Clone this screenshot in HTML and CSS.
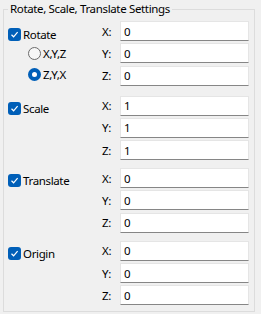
FILE: index.html
```html
<!DOCTYPE html>
<html>
<head lang="en">
    <meta charset="UTF-8">
    <title>Rotate, Scale, Translate Settings</title>
    <link rel="stylesheet" href="styles.css">
</head>
<body>
<fieldset class="group">
    <legend>Rotate, Scale, Translate Settings</legend>

    <div class="section first">
        <div class="side">
            <label class="check"><span class="box"><svg width="9" height="9" viewBox="0 0 9 9"><path d="M1.5 4.8 L3.6 6.8 L7.6 2.2" fill="none" stroke="#fff" stroke-width="1.2"/></svg></span>Rotate</label>
            <div class="radios">
                <label class="radio"><span class="dot"></span>X,Y,Z</label>
                <label class="radio on"><span class="dot"></span>Z,Y,X</label>
            </div>
        </div>
        <div class="fields">
            <label>X:</label><input type="text" value="0">
            <label>Y:</label><input type="text" value="0">
            <label>Z:</label><input type="text" value="0">
        </div>
    </div>

    <div class="section">
        <div class="side">
            <label class="check"><span class="box"><svg width="9" height="9" viewBox="0 0 9 9"><path d="M1.5 4.8 L3.6 6.8 L7.6 2.2" fill="none" stroke="#fff" stroke-width="1.2"/></svg></span>Scale</label>
        </div>
        <div class="fields">
            <label>X:</label><input type="text" value="1">
            <label>Y:</label><input type="text" value="1">
            <label>Z:</label><input type="text" value="1">
        </div>
    </div>

    <div class="section">
        <div class="side">
            <label class="check"><span class="box"><svg width="9" height="9" viewBox="0 0 9 9"><path d="M1.5 4.8 L3.6 6.8 L7.6 2.2" fill="none" stroke="#fff" stroke-width="1.2"/></svg></span>Translate</label>
        </div>
        <div class="fields">
            <label>X:</label><input type="text" value="0">
            <label>Y:</label><input type="text" value="0">
            <label>Z:</label><input type="text" value="0">
        </div>
    </div>

    <div class="section">
        <div class="side">
            <label class="check"><span class="box"><svg width="9" height="9" viewBox="0 0 9 9"><path d="M1.5 4.8 L3.6 6.8 L7.6 2.2" fill="none" stroke="#fff" stroke-width="1.2"/></svg></span>Origin</label>
        </div>
        <div class="fields">
            <label>X:</label><input type="text" value="0">
            <label>Y:</label><input type="text" value="0">
            <label>Z:</label><input type="text" value="0">
        </div>
    </div>
</fieldset>
</body>
</html>
```

FILE: styles.css
```css
* {
    margin: 0;
    padding: 0;
    box-sizing: border-box;
}

body {
    background-color: #f0f0f0;
    font: 11.5px "Noto Sans", "Liberation Sans", sans-serif;
    letter-spacing: -0.35px;
    color: #000;
    padding: 1px 0 0 3px;
}

.group {
    width: 252px;
    height: 311px;
    border: 1px solid #dcdcdc;
    padding: 4px 5px 0 4px;
}
.group legend {
    padding: 0 2px;
    line-height: 16px;
}

.section {
    display: flex;
    margin-bottom: 8px;
}
.section.first {
    margin-bottom: 10px;
}

.side {
    width: 94px;
    padding-top: 6px;
}
.first .side {
    padding-top: 7px;
}

.check {
    display: flex;
    align-items: center;
    gap: 2px;
    height: 13px;
}
.check .box {
    width: 13px;
    height: 13px;
    border-radius: 3px;
    background-color: #005fb8;
    display: flex;
    align-items: center;
    justify-content: center;
}
.check .box svg {
    display: block;
}

.radios {
    padding-left: 20px;
    margin-top: 6px;
    display: flex;
    flex-direction: column;
    gap: 8px;
}
.radio {
    display: flex;
    align-items: center;
    gap: 2px;
    height: 13px;
}
.radio .dot {
    width: 13px;
    height: 13px;
    border-radius: 50%;
    border: 1px solid #6b6b6b;
    background-color: #f7f7f7;
}
.radio.on .dot {
    border: 4px solid #005fb8;
    background-color: #fff;
}

.fields {
    display: grid;
    grid-template-columns: 18px 129px;
    row-gap: 2.3px;
    align-items: center;
}
.fields input {
    height: 20px;
    width: 129px;
    border: 1px solid #e5e5e5;
    border-bottom-color: #868686;
    background-color: #fff;
    padding: 0 3px;
    font: inherit;
    color: #000;
    outline: none;
}
```
